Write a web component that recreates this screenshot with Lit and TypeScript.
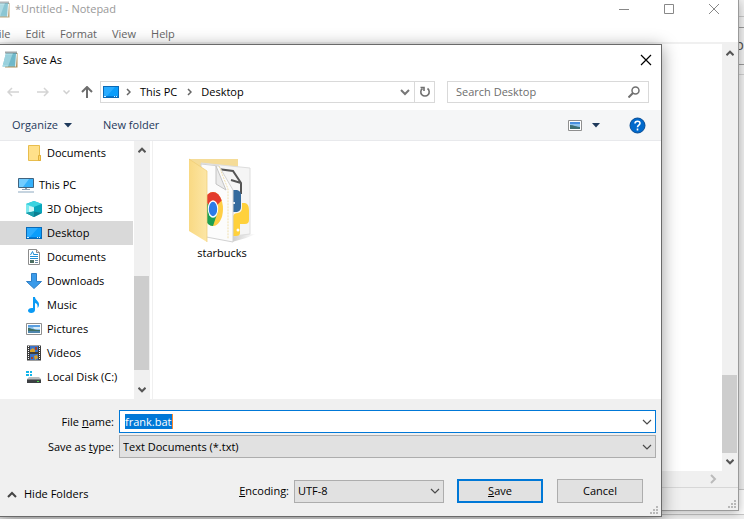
import { LitElement, html, svg, css, nothing } from "lit";
import { customElement, query, state } from "lit/decorators.js";
import { classMap } from "lit/directives/class-map.js";

const notepadIcon = svg`<svg class="ic" width="16" height="17" viewBox="0 0 16 17">
  <path d="M5 2h10.500v14.500H3z" fill="#b08f5a"/>
  <path d="M4 2h10.500L13.500 15.500H.500z" fill="#74bccd"/>
  <path d="M4 2h7L6 15.500H.500z" fill="#a8dbe5"/>
  <path d="M3.500 5h10M3 7h10.500M2.500 9h11M2 11h11M1.500 13h11.500" stroke="#5fa9bb" stroke-width=".6" opacity=".6"/>
  <path d="M14.500 3L13.500 15.500" stroke="#e8f4f6"/>
  <path d="M3.500 1.500h11" stroke="#3f4d52" stroke-width="2" stroke-dasharray="1 1"/>
</svg>`;

const desktopIcon = svg`<svg class="ic" width="16" height="16" viewBox="0 0 16 16">
  <path d="M0 2h16v12H0z" fill="#0a69b5"/>
  <path d="M1 3h14v9H1z" fill="#0a9dfb"/>
  <path d="M1 3h11L4 12H1z" fill="#2aacff"/>
  <path d="M1 12.500h14" stroke="#0078d4"/>
  <path d="M1 12.500h2M11 12.500h1M13 12.500h1" stroke="#d9f0ff"/>
</svg>`;

const folderIcon = svg`<svg class="ic" width="16" height="16" viewBox="0 0 16 16">
  <path d="M2.500.500h11v10h1v5h-12z" fill="#ffe08a" stroke="#e8bd4d"/>
  <path d="M12.500 10.500v5h2v-5z" fill="#ffd566" stroke="#e0af3a"/>
</svg>`;

const pcIcon = svg`<svg class="ic" width="16" height="16" viewBox="0 0 16 16">
  <path d="M.500 1.500h15v9H.500z" fill="#35b1fb" stroke="#41637f"/>
  <path d="M1 2h10L5 10H1z" fill="#72ccff"/>
  <path d="M7 11h2v1H7z" fill="#8d9cab"/>
  <path d="M4 12.500h8" stroke="#8fa3b5"/>
  <path d="M0 15h16" stroke="#8da9c0"/>
</svg>`;

const cubeIcon = svg`<svg class="ic" width="16" height="16" viewBox="0 0 16 16">
  <path d="M0 3l8-3 8 3v9l-8 4-8-4z" fill="#21b8cb"/>
  <path d="M0 3l8-3 8 3-8 3z" fill="#39d3e0"/>
  <path d="M0 3l8 3v5l-8 1z" fill="#7be9ee"/>
  <path d="M3 5l5 1.500V10l-5 1z" fill="#d2f8f9"/>
  <path d="M16 3L8 6v5l8 1z" fill="#08a5bb"/>
  <path d="M8 10.500l8 1.500-8 4-8-4z" fill="#0b7f92"/>
  <path d="M8 10.500V16l-8-4z" fill="#1aa0ae"/>
</svg>`;

const documentIcon = svg`<svg class="ic" width="16" height="16" viewBox="0 0 16 16">
  <path d="M2.500.500h8l3 3v12h-11z" fill="#fff" stroke="#8c8c8c"/>
  <path d="M10.500.500v3h3" fill="#e8e8e8" stroke="#8c8c8c"/>
  <path d="M4.500 6L6.500 2.500 8 6M8 5.500h4M4 7.500h8M4 9.500h8" fill="none" stroke="#1f8fd6"/>
  <path d="M4 11h4v3H4z" fill="#4c6f62"/>
  <path d="M9 11.500h3M9 13.500h3" stroke="#6d8ba5"/>
</svg>`;

const downloadIcon = svg`<svg class="ic" width="16" height="16" viewBox="0 0 16 16">
  <path d="M5.500.500h5v8h5L8 15.500.500 8.500h5z" fill="#3b9bea" stroke="#2f7fc6"/>
</svg>`;

const musicIcon = svg`<svg class="ic" width="16" height="16" viewBox="0 0 16 16">
  <path d="M7 0h2c0 3 4 4 4 7.500 0 1.500-.5 2.500-1.500 3.500.5-3-.5-4.500-2.500-5v7c0 2-1.800 3-3.800 3S2 15 2 13.500 4 10.500 7 11z" fill="#0a9af5"/>
</svg>`;

const pictureIcon = svg`<svg class="ic" width="16" height="16" viewBox="0 0 16 16">
  <path d="M.500 2.500h15v11H.500z" fill="#fff" stroke="#8f8f8f"/>
  <path d="M2 4h12v8H2z" fill="#8fc3ee"/>
  <path d="M2 4h12v2H2z" fill="#5b9fe0"/>
  <path d="M7 6h7v2H8z" fill="#d8ecf8"/>
  <path d="M2 7c3 0 5 2 12 2v1H2z" fill="#3f6f63"/>
  <path d="M2 10h12v2H2z" fill="#4f86ad"/>
</svg>`;

const videoIcon = svg`<svg class="ic" width="16" height="16" viewBox="0 0 16 16">
  <path d="M1 .500h14v15H1z" fill="#3c3c3c"/>
  <path d="M2.500 1v14M13.500 1v14" stroke="#fff" stroke-dasharray="1 1"/>
  <path d="M4 1h8v6H4zM4 9h8v6H4z" fill="#3c73c8"/>
  <path d="M4 5l3-2 2 2v2H4zM8 11l3-1 1 3-3 2z" fill="#d8a02b"/>
  <path d="M9 2h2v3H9zM5 12h2v2H5z" fill="#a1422d"/>
</svg>`;

const diskIcon = svg`<svg class="ic" width="16" height="16" viewBox="0 0 16 16">
  <path d="M0 2h3v2H0zM4 2h2v2H4zM0 5h3v2H0zM4 5h2v2H4z" fill="#12b5ea"/>
  <path d="M3 8h10l2 2H1z" fill="#b9bcbe"/>
  <path d="M1 10h14v4H1z" fill="#3d4043"/>
  <path d="M1 10.500h14" stroke="#7a7d80"/>
  <path d="M11 12h2v1h-2z" fill="#4be04b"/>
</svg>`;

const chevronDown = svg`<svg class="chev" width="10" height="6" viewBox="0 0 10 6"><path d="M1 1l4 4 4-4" fill="none" stroke="#4a4a4a" stroke-width="1.200"/></svg>`;
const boldDown = svg`<svg width="8" height="6" viewBox="0 0 8 6"><path d="M.500.800L4 4.300 7.500.800" fill="none" stroke="#555" stroke-width="2"/></svg>`;
const boldUp = svg`<svg width="8" height="6" viewBox="0 0 8 6"><path d="M.500 5.200L4 1.700 7.500 5.200" fill="none" stroke="#555" stroke-width="2"/></svg>`;
const crumbArrow = svg`<svg class="crumb-arrow" width="5" height="8" viewBox="0 0 5 8"><path d="M1 1l3 3-3 3" fill="none" stroke="#666" stroke-width="1.500"/></svg>`;
const caretDown = svg`<svg width="8" height="5" viewBox="0 0 8 5"><path d="M0 0h8L4 4.500z" fill="#1e395b"/></svg>`;
const grip = svg`<svg width="8" height="8" viewBox="0 0 8 8"><path d="M6 0h2v2H6zM3 3h2v2H3zM6 3h2v2H6zM0 6h2v2H0zM3 6h2v2H3zM6 6h2v2H6z" fill="#b8b8b8"/></svg>`;

const folderArt = svg`<svg width="68" height="87" viewBox="0 0 68 87">
  <defs>
    <linearGradient id="flap" x1="0" x2="1"><stop offset="0" stop-color="#f9d983"/><stop offset="1" stop-color="#fce6a6"/></linearGradient>
    <linearGradient id="shade" x1="0" x2="1"><stop offset="0" stop-color="#999" stop-opacity=".5"/><stop offset="1" stop-color="#999" stop-opacity="0"/></linearGradient>
  </defs>
  <path d="M44 84V76l24 0-10 4z" fill="url(#shade)"/>
  <path d="M1 1h49v70H1z" fill="#f5dc98"/>
  <path d="M13 5l49 5v66l-16 2z" fill="#f5f5f5" stroke="#ddd"/>
  <path d="M22 10l23 3 8 12v11M43 22l10 3" fill="none" stroke="#555" stroke-width="2"/>
  <path d="M44 32h5q4 1 4 5v12q0 4-4 5h-5z" fill="#356b9e"/>
  <path d="M45 44h2v2h-2z" fill="#dfeaf4"/>
  <path d="M54 45h3q4 1 4 7v10q0 4-4 4h-5v9q0 3-4 3h-3V58q1-3 5-3 4-1 4-5z" fill="#ffd13c"/>
  <circle cx="50" cy="72" r="1.500" fill="#fff"/>
  <path d="M13 6l18 2 14 24v52L13 78z" fill="#fcfcfc" stroke="#d2d2d2"/>
  <path d="M28 8v18l10 6z" fill="#ebebeb" stroke="#c4c4c4"/>
  <path d="M31 8l9 23v50" fill="none" stroke="#f0dfae" stroke-dasharray="2 1"/>
  <g transform="translate(25 51) scale(10 17)">
    <circle r="1" fill="#ffce44"/>
    <path d="M0 0L-.87-.5A1 1 0 0 1 .87-.5z" fill="#e33b2e"/>
    <path d="M0 0L-.87-.5A1 1 0 0 0 0 1L.45.2z" fill="#1da053"/>
    <circle r=".52" fill="#fff"/>
    <circle r=".42" fill="#2c7be8"/>
  </g>
  <path d="M1 1l18 12v71L1 73z" fill="url(#flap)"/>
  <path d="M1 1l18 12v71" fill="none" stroke="#eecb72" stroke-width=".7"/>
</svg>`;

interface Place {
  label: string;
  icon: unknown;
  root?: boolean;
}

const places: Place[] = [
  { label: "Documents", icon: folderIcon },
  { label: "This PC", icon: pcIcon, root: true },
  { label: "3D Objects", icon: cubeIcon },
  { label: "Desktop", icon: desktopIcon },
  { label: "Documents", icon: documentIcon },
  { label: "Downloads", icon: downloadIcon },
  { label: "Music", icon: musicIcon },
  { label: "Pictures", icon: pictureIcon },
  { label: "Videos", icon: videoIcon },
  { label: "Local Disk (C:)", icon: diskIcon },
];

const base = css`
  *, *::before, *::after { box-sizing: border-box; }
  button, input, select {
    font: inherit;
    color: inherit;
    margin: 0;
    padding: 0;
    border: 0;
    border-radius: 0;
    background: none;
    outline: none;
  }
  svg { display: block; flex: none; }
`;

@customElement("notepad-window")
export class NotepadWindow extends LitElement {
  static styles = [base, css`
    :host {
      display: flex;
      flex-direction: column;
      background: #fff;
      border: 1px solid #9a9a9a;
      border-top: 0;
      box-shadow: 0 2px 10px rgba(0, 0, 0, 0.3);
      color: #666;
    }
    .title { display: flex; align-items: center; height: 18px; padding: 0 2px 0 1px; color: #999; }
    .title .ic { opacity: 0.8; }
    .name { flex: 1; padding-left: 5px; }
    .title button { width: 45px; height: 18px; display: grid; place-items: center; }
    .menu { display: flex; gap: 15px; height: 24px; align-items: center; padding-top: 8px; }
    .body { flex: 1; display: grid; grid-template-columns: 1fr 16px; grid-template-rows: 1fr 16px; border-top: 2px solid #f0f0f0; min-height: 0; }
    textarea { border: 0; resize: none; outline: none; width: 100%; }
    .vbar { background: #f0f0f0; display: flex; flex-direction: column; align-items: center; padding: 6px 1px 6px 0; }
    .thumb { width: 100%; height: 78px; background: #cdcdcd; margin: auto 0 6px; }
    .hbar { grid-column: 1 / 3; background: #f0f0f0; display: flex; justify-content: flex-end; align-items: center; padding-right: 21px; }
    .status { height: 23px; background: #f0f0f0; border-top: 1px solid #d7d7d7; display: flex; justify-content: flex-end; align-items: flex-end; padding: 2px; }
  `];

  render() {
    return html`
      <div class="title">
        ${notepadIcon}
        <span class="name">*Untitled - Notepad</span>
        <button aria-label="Minimize"><svg width="10" height="10"><path d="M0 5.500h10" stroke="#888"/></svg></button>
        <button aria-label="Maximize"><svg width="10" height="10"><path d="M.500.500h9v9h-9z" fill="none" stroke="#888"/></svg></button>
        <button aria-label="Close"><svg width="10" height="10"><path d="M0 0l10 10M10 0L0 10" stroke="#888"/></svg></button>
      </div>
      <nav class="menu">
        ${["File", "Edit", "Format", "View", "Help"].map((m) => html`<button>${m}</button>`)}
      </nav>
      <div class="body">
        <textarea aria-label="Text"></textarea>
        <div class="vbar">${boldUp}<div class="thumb"></div>${boldDown}</div>
        <div class="hbar"><svg width="7" height="10" viewBox="0 0 7 10"><path d="M1 1l4 4-4 4" fill="none" stroke="#bbb" stroke-width="2"/></svg></div>
      </div>
      <div class="status">${grip}</div>
    `;
  }
}

@customElement("save-dialog")
export class SaveDialog extends LitElement {
  @state() private current = 3;
  @query("#file-name") private nameField!: HTMLInputElement;

  static styles = [base, css`
    :host {
      display: flex;
      flex-direction: column;
      background: #fff;
      border: 1px solid #6a6a6a;
      border-left: 0;
      box-shadow: 0 3px 16px rgba(0, 0, 0, 0.4);
      color: #000;
    }
    .title { display: flex; align-items: center; height: 29px; padding: 0 9px 0 2px; gap: 5px; }
    .title h1 { flex: 1; margin: 0; font-size: inherit; font-weight: 400; }
    .nav { display: flex; align-items: center; height: 36px; padding: 0 12px 0 7px; }
    .nav > button { height: 22px; display: grid; place-items: center; }
    .back { width: 12px; }
    .fwd { width: 12px; margin-left: 18px; }
    .recent { width: 8px; margin-left: 13px; }
    .up { width: 12px; margin: 0 7px 0 11px; }
    .address { flex: 1; display: flex; align-items: center; height: 22px; border: 1px solid #d9d9d9; padding-left: 2px; }
    .crumb { padding: 0 3px; }
    .crumb-arrow { margin: 0 6px 0 7px; }
    .drop { margin-left: auto; width: 18px; display: grid; place-items: center; }
    .refresh { width: 20px; height: 20px; border-left: 1px solid #d9d9d9; display: grid; place-items: center; }
    .search { display: flex; align-items: center; width: 202px; height: 22px; margin-left: 12px; border: 1px solid #d9d9d9; padding: 0 8px; }
    .search input { flex: 1; min-width: 0; }
    .search input::placeholder { color: #6d6d6d; opacity: 1; }
    .tools { display: flex; align-items: center; height: 31px; padding: 0 15px 0 12px; background: #f5f6f7; border-bottom: 1px solid #e8e9ec; color: #1e395b; }
    .tools button { display: flex; align-items: center; gap: 6px; }
    .new { margin-left: 31px; }
    .view { margin-left: auto; }
    .tools .view { gap: 10px; }
    .help { margin-left: 29px; }
    .main { flex: 1; display: flex; min-height: 0; }
    .tree { width: 133px; margin: 0; padding: 0; list-style: none; }
    .tree button { display: flex; align-items: center; gap: 5px; width: 100%; height: 24px; padding-left: 26px; text-align: left; white-space: nowrap; }
    .tree .root { margin-top: 8px; padding-left: 18px; }
    .tree .on { background: #d9d9d9; }
    .bar { width: 16px; margin-left: 1px; background: #f0f0f0; display: flex; flex-direction: column; align-items: center; padding: 6px 1px 6px 0; }
    .thumb { width: 100%; height: 94px; background: #cdcdcd; margin: auto 0 17px; }
    .files { flex: 1; margin-left: 2px; border-left: 1px solid #f0f0f0; padding: 17px 0 0 35px; }
    .file { display: flex; flex-direction: column; align-items: center; width: 68px; }
    .form { background: #f0f0f0; padding: 11px 5px 0 0; display: grid; grid-template-columns: 114px 1fr; gap: 2px 5px; }
    .form label { text-align: right; align-self: center; }
    .combo { display: flex; align-items: center; height: 23px; border: 1px solid #adadad; background: #e1e1e1; position: relative; }
    .combo select { appearance: none; width: 100%; height: 100%; padding-left: 3px; }
    .combo .chev { position: absolute; right: 3px; pointer-events: none; }
    .edit { background: #fff; border-color: #0078d7; padding-left: 5px; }
    .edit input { field-sizing: content; line-height: 15px; height: 15px; }
    .edit input::selection { background: #0078d7; color: #fff; }
    .caret { width: 1px; height: 15px; background: #ff8728; }
    .foot { background: #f0f0f0; display: flex; align-items: center; height: 58px; padding: 8px 18px 0 7px; position: relative; }
    .hide { display: flex; align-items: center; gap: 7px; margin-right: auto; padding-top: 6px; }
    .foot label { margin-right: 5px; }
    .enc { width: 150px; }
    .push { width: 86px; height: 24px; background: #e1e1e1; border: 1px solid #adadad; margin-left: 14px; }
    .push.default { border: 2px solid #0078d7; margin-left: 13px; }
    .grip { position: absolute; right: 3px; bottom: 2px; }
  `];

  firstUpdated() {
    this.nameField.focus();
    this.nameField.select();
  }

  render() {
    return html`
      <div class="title">
        ${notepadIcon}
        <h1>Save As</h1>
        <button aria-label="Close"><svg width="12" height="12" viewBox="0 0 12 12"><path d="M1 1l10 10M11 1L1 11" stroke="#000" stroke-width="1.200"/></svg></button>
      </div>
      <div class="nav">
        <button class="back" aria-label="Back"><svg width="12" height="10" viewBox="0 0 12 10"><path d="M12 5H1M5 1L1 5l4 4" fill="none" stroke="#d4d4d4" stroke-width="1.500"/></svg></button>
        <button class="fwd" aria-label="Forward"><svg width="12" height="10" viewBox="0 0 12 10"><path d="M0 5h11M7 1l4 4-4 4" fill="none" stroke="#d4d4d4" stroke-width="1.500"/></svg></button>
        <button class="recent" aria-label="Recent locations"><svg width="7" height="5" viewBox="0 0 7 5"><path d="M.500.500l3 3 3-3" fill="none" stroke="#d0d0d0" stroke-width="1.500"/></svg></button>
        <button class="up" aria-label="Up"><svg width="12" height="12" viewBox="0 0 12 12"><path d="M6 12V1M1 6l5-5 5 5" fill="none" stroke="#6e6e6e" stroke-width="2"/></svg></button>
        <div class="address">
          ${desktopIcon}${crumbArrow}<button class="crumb">This PC</button>${crumbArrow}<button class="crumb">Desktop</button>
          <button class="drop" aria-label="Previous locations"><svg width="10" height="7" viewBox="0 0 10 7"><path d="M1 1l4 4 4-4" fill="none" stroke="#777" stroke-width="2"/></svg></button>
          <button class="refresh" aria-label="Refresh"><svg width="12" height="12" viewBox="0 0 12 12"><path d="M8.500 2.500A4.200 4.200 0 1 1 3.500 2.500" fill="none" stroke="#707070" stroke-width="1.600"/><path d="M1.500 1.500h3.500V5" fill="none" stroke="#707070" stroke-width="1.600"/></svg></button>
        </div>
        <div class="search">
          <input type="search" aria-label="Search Desktop" placeholder="Search Desktop">
          <svg width="12" height="12" viewBox="0 0 12 12"><circle cx="7.500" cy="4.500" r="3.500" fill="none" stroke="#707070" stroke-width="1.500"/><path d="M5 7L.500 11.500" stroke="#707070" stroke-width="2"/></svg>
        </div>
      </div>
      <div class="tools">
        <button>Organize ${caretDown}</button>
        <button class="new">New folder</button>
        <button class="view" aria-label="Change your view">
          <svg width="14" height="11" viewBox="0 0 14 11"><path d="M.500.500h13v10H.500z" fill="#fff" stroke="#8f8f8f"/><path d="M2 2h10v7H2z" fill="#8fc3ee"/><path d="M2 2h10v2H2z" fill="#4a90e0"/><path d="M2 5c3 0 4 1 10 2v2H2z" fill="#3f6f73"/></svg>
          ${caretDown}
        </button>
        <button class="help" aria-label="Get help"><svg width="17" height="17" viewBox="0 0 17 17"><circle cx="8.500" cy="8.500" r="7.500" fill="#0069cc" stroke="#064b94"/><path d="M6 6.500c0-3 5-3 5-.2 0 1.800-2.500 1.800-2.500 4M8.500 11.500v2" fill="none" stroke="#fff" stroke-width="1.600"/></svg></button>
      </div>
      <div class="main">
        <ul class="tree">
          ${places.map((p, i) => html`<li><button
            class=${classMap({ root: !!p.root, on: i === this.current })}
            aria-current=${i === this.current ? "true" : nothing}
            @click=${() => (this.current = i)}>${p.icon}${p.label}</button></li>`)}
        </ul>
        <div class="bar">${boldUp}<div class="thumb"></div>${boldDown}</div>
        <div class="files"><button class="file">${folderArt}starbucks</button></div>
      </div>
      <div class="form">
        <label for="file-name">File <u>n</u>ame:</label>
        <div class="combo edit"><input id="file-name" value="frank.bat"><span class="caret"></span>${chevronDown}</div>
        <label for="file-type">Save as <u>t</u>ype:</label>
        <div class="combo"><select id="file-type"><option>Text Documents (*.txt)</option><option>All Files</option></select>${chevronDown}</div>
      </div>
      <div class="foot">
        <button class="hide"><svg width="10" height="7" viewBox="0 0 10 7"><path d="M1 6l4-4 4 4" fill="none" stroke="#444" stroke-width="2"/></svg>Hide Folders</button>
        <label for="encoding"><u>E</u>ncoding:</label>
        <div class="combo enc"><select id="encoding"><option>UTF-8</option><option>ANSI</option></select>${chevronDown}</div>
        <button class="push default"><u>S</u>ave</button>
        <button class="push">Cancel</button>
        <span class="grip">${grip}</span>
      </div>
    `;
  }
}

@customElement("app-root")
export class AppRoot extends LitElement {
  static styles = css`
    :host {
      display: block;
      position: relative;
      height: 100vh;
      overflow: hidden;
      background: #f1f1f1;
      font: 11px/16px "Open Sans", "Noto Sans", sans-serif;
    }
    .behind { height: 100%; display: flex; flex-direction: column; color: #555; text-align: right; }
    .strip { height: 16px; }
    .row { border-top: 1px solid #c8c8c8; height: 10px; }
    .field { border: solid #9a9a9a; border-width: 1px 0; height: 36px; font-size: 15px; line-height: 32px; }
    .page { flex: 1; margin-top: 9px; border-top: 1px solid #d0d0d0; }
    .end { border: solid #c8c8c8; border-width: 1px 0; height: 24px; background: #fff; }
    .base { height: 4px; }
    notepad-window, save-dialog { position: absolute; }
    notepad-window { left: -8px; right: 5px; top: 0; bottom: 8px; }
    save-dialog { left: 0; right: 82px; top: 44px; bottom: 2px; }
  `;

  render() {
    return html`
      <div class="behind">
        <div class="strip"></div>
        <div class="row"></div>
        <div class="field">p</div>
        <div class="page"></div>
        <div class="end"></div>
        <div class="base"></div>
      </div>
      <notepad-window></notepad-window>
      <save-dialog></save-dialog>
    `;
  }
}
